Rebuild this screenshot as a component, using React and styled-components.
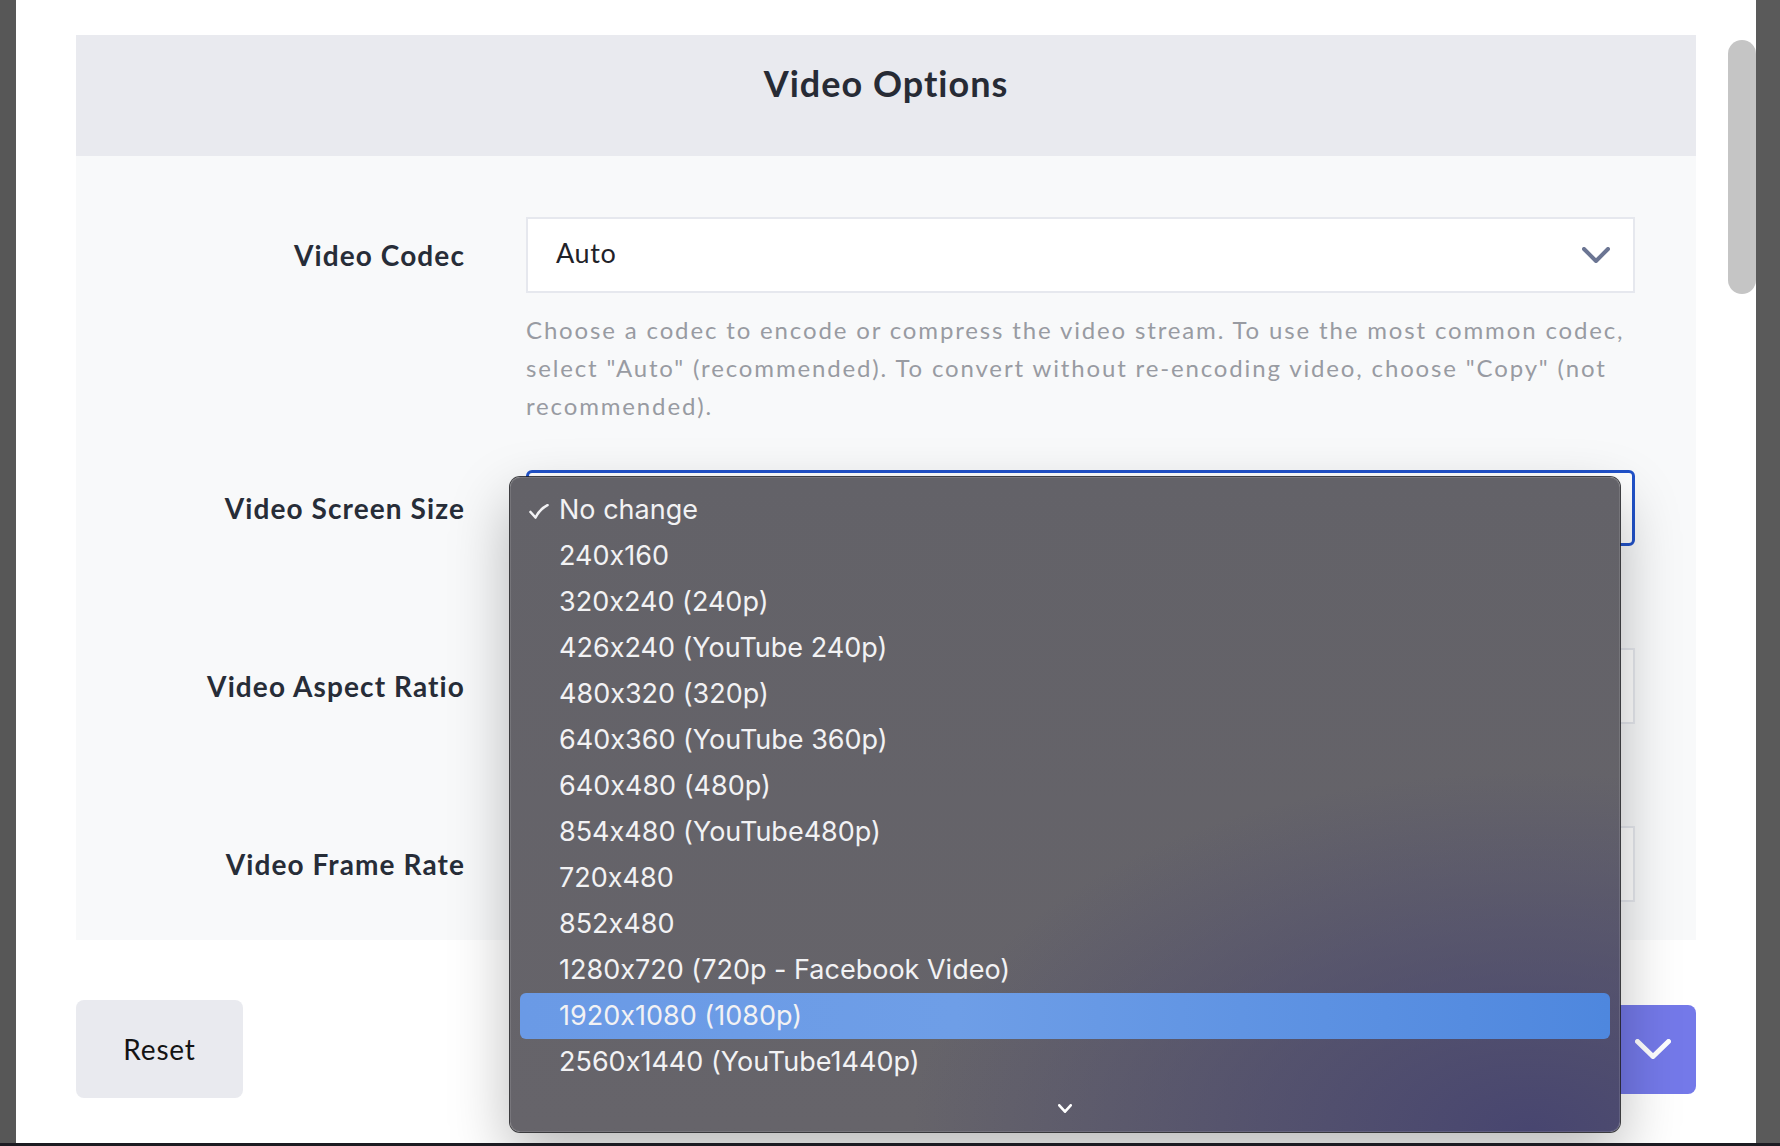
import React from "react";
import styled, { createGlobalStyle } from "styled-components";

const sizes = [
  "No change",
  "240x160",
  "320x240 (240p)",
  "426x240 (YouTube 240p)",
  "480x320 (320p)",
  "640x360 (YouTube 360p)",
  "640x480 (480p)",
  "854x480 (YouTube480p)",
  "720x480",
  "852x480",
  "1280x720 (720p - Facebook Video)",
  "1920x1080 (1080p)",
  "2560x1440 (YouTube1440p)",
];

const Chevron = ({ w = 28, h = 16, stroke = 4, color = "#6b7593" }) => (
  <svg width={w} height={h} viewBox={`0 0 ${w} ${h}`} fill="none">
    <polyline
      points={`${stroke / 2},${stroke / 2} ${w / 2},${h - stroke / 2} ${w - stroke / 2},${stroke / 2}`}
      stroke={color}
      strokeWidth={stroke}
      strokeLinecap="round"
      strokeLinejoin="round"
    />
  </svg>
);

const Check = () => (
  <svg width="20" height="15" viewBox="0 0 20 15" fill="none">
    <path
      d="M1.5 8 L6.5 13.5 C9 8.5 13 4 18.5 1.2"
      stroke="#f2f2f4"
      strokeWidth="2.6"
      strokeLinecap="round"
      strokeLinejoin="round"
    />
  </svg>
);

const App = () => {
  return (
    <>
      <Global />
      <Window>
        <Screen>
          <SideBar />
          <Main>
            <Panel>
              <PanelHeader>
                <Title>Video Options</Title>
              </PanelHeader>
              <PanelBody>
                <Row>
                  <Label>Video Codec</Label>
                  <Field>
                    <Select>
                      <SelectValue>Auto</SelectValue>
                      <Chevron />
                    </Select>
                    <Help>
                      Choose a codec to encode or compress the video stream. To use the most
                      common codec, select "Auto" (recommended). To convert without re-encoding
                      video, choose "Copy" (not recommended).
                    </Help>
                  </Field>
                </Row>
                <Row $gap={102}>
                  <Label>Video Screen Size</Label>
                  <Field>
                    <Select $focused>
                      <SelectValue />
                      <Chevron />
                    </Select>
                  </Field>
                </Row>
                <Row $gap={102}>
                  <Label>Video Aspect Ratio</Label>
                  <Field>
                    <Select>
                      <SelectValue />
                      <Chevron />
                    </Select>
                  </Field>
                </Row>
                <Row $gap={0}>
                  <Label>Video Frame Rate</Label>
                  <Field>
                    <Select>
                      <SelectValue />
                      <Chevron />
                    </Select>
                  </Field>
                </Row>
              </PanelBody>
            </Panel>

            <Footer>
              <ResetButton>Reset</ResetButton>
              <ActionButton>
                <Chevron w={36} h={20} stroke={5} color="#ffffff" />
              </ActionButton>
            </Footer>

            <ScrollThumb />

            <Menu>
              {sizes.map((s, i) => (
                <MenuItem key={s} $active={i === 11}>
                  <CheckSlot>{i === 0 && <Check />}</CheckSlot>
                  {s}
                </MenuItem>
              ))}
              <MenuArrow>
                <Chevron w={14} h={9} stroke={2.6} color="#ffffff" />
              </MenuArrow>
            </Menu>
          </Main>
          <EdgeBar />
        </Screen>
        <BottomStrip />
      </Window>
    </>
  );
};

const Global = createGlobalStyle`
  body {
    margin: 0;
    background: #ffffff;
    font-family: Lato, "Liberation Sans", sans-serif;
  }
`;

const Window = styled.div`
  width: 1780px;
  height: 1146px;
  display: flex;
  flex-direction: column;
  overflow: hidden;
`;

const Screen = styled.div`
  flex: 1;
  display: flex;
  flex-direction: row;
  min-height: 0;
`;

const SideBar = styled.div`
  width: 16px;
  background: #575757;
`;

const EdgeBar = styled.div`
  width: 24px;
  background: #5a5a5a;
`;

const BottomStrip = styled.div`
  height: 3px;
  background: #1c1b22;
`;

const Main = styled.div`
  flex: 1;
  position: relative;
  background: #ffffff;
  padding: 35px 60px 0 60px;
  overflow: hidden;
`;

const Panel = styled.div`
  display: flex;
  flex-direction: column;
`;

const PanelHeader = styled.div`
  height: 121px;
  box-sizing: border-box;
  padding-top: 30px;
  background: #e9eaef;
  text-align: center;
`;

const Title = styled.h1`
  margin: 0;
  font-size: 36px;
  line-height: 36px;
  font-weight: 700;
  letter-spacing: 1px;
  color: #272b35;
`;

const PanelBody = styled.div`
  background: #f8f9fa;
  padding: 61px 61px 38px 0;
  display: flex;
  flex-direction: column;
`;

const Row = styled.div`
  display: grid;
  grid-template-columns: 389px 1fr;
  column-gap: 61px;
  margin-bottom: ${(p) => (p.$gap === undefined ? 45 : p.$gap)}px;
`;

const Label = styled.div`
  height: 76px;
  display: flex;
  align-items: center;
  justify-content: flex-end;
  font-size: 28px;
  font-weight: 700;
  letter-spacing: 1.1px;
  color: #272d38;
`;

const Field = styled.div`
  display: flex;
  flex-direction: column;
`;

const Select = styled.div`
  height: 76px;
  box-sizing: border-box;
  display: flex;
  align-items: center;
  justify-content: space-between;
  padding: 0 23px 0 28px;
  background: #ffffff;
  border: ${(p) => (p.$focused ? "3px solid #2152c9" : "2px solid #e6e8ee")};
  border-radius: ${(p) => (p.$focused ? "6px" : "0")};
`;

const SelectValue = styled.span`
  font-size: 27px;
  letter-spacing: 0.6px;
  color: #1f2229;
  padding-bottom: 6px;
`;

const Help = styled.p`
  margin: 18px 0 0;
  font-size: 24px;
  line-height: 38px;
  letter-spacing: 1.85px;
  color: #989ba2;
`;

const Footer = styled.div`
  margin-top: 60px;
  display: flex;
  align-items: center;
  justify-content: space-between;
`;

const ResetButton = styled.button`
  width: 167px;
  height: 98px;
  border: none;
  border-radius: 8px;
  background: #e9eaef;
  font-family: Lato, "Liberation Sans", sans-serif;
  font-size: 28px;
  letter-spacing: 0.8px;
  color: #141414;
  padding: 0;
`;

const ActionButton = styled.button`
  width: 300px;
  height: 89px;
  border: none;
  border-radius: 8px;
  background: #7479e9;
  display: flex;
  align-items: center;
  justify-content: flex-end;
  padding: 0 25px 0 30px;
`;

const ScrollThumb = styled.div`
  position: absolute;
  left: 1712px;
  top: 40px;
  width: 28px;
  height: 254px;
  border-radius: 14px;
  background: #c5c5c5;
`;

const Menu = styled.div`
  position: absolute;
  left: 494px;
  top: 477px;
  width: 1110px;
  height: 655px;
  box-sizing: border-box;
  padding: 10px 10px 0;
  border-radius: 10px;
  background:
    radial-gradient(ellipse 620px 360px at 92% 100%, rgba(70, 68, 112, 0.95) 0%, rgba(70, 68, 112, 0.55) 45%, rgba(100, 99, 106, 0) 100%),
    linear-gradient(180deg, #636268 0%, #66646a 100%);
  box-shadow:
    0 0 0 1px rgba(30, 30, 34, 0.85),
    inset 0 0 0 1px rgba(255, 255, 255, 0.12),
    0 24px 60px rgba(0, 0, 0, 0.28);
  font-family: Inter, "Noto Sans", sans-serif;
  font-feature-settings: "calt" 0;
`;

const MenuItem = styled.div`
  height: 46px;
  display: flex;
  align-items: center;
  border-radius: 6px;
  font-size: 27px;
  line-height: 46px;
  color: #f2f2f4;
  background: ${(p) =>
    p.$active ? "linear-gradient(90deg, #6a9ae6 0%, #6e9ee7 40%, #4e87de 100%)" : "transparent"};
`;

const CheckSlot = styled.span`
  width: 39px;
  display: flex;
  align-items: center;
  padding-left: 9px;
  box-sizing: border-box;
  padding-top: 3px;
`;

const MenuArrow = styled.div`
  height: 46px;
  display: flex;
  align-items: center;
  justify-content: center;
`;

export default App;
